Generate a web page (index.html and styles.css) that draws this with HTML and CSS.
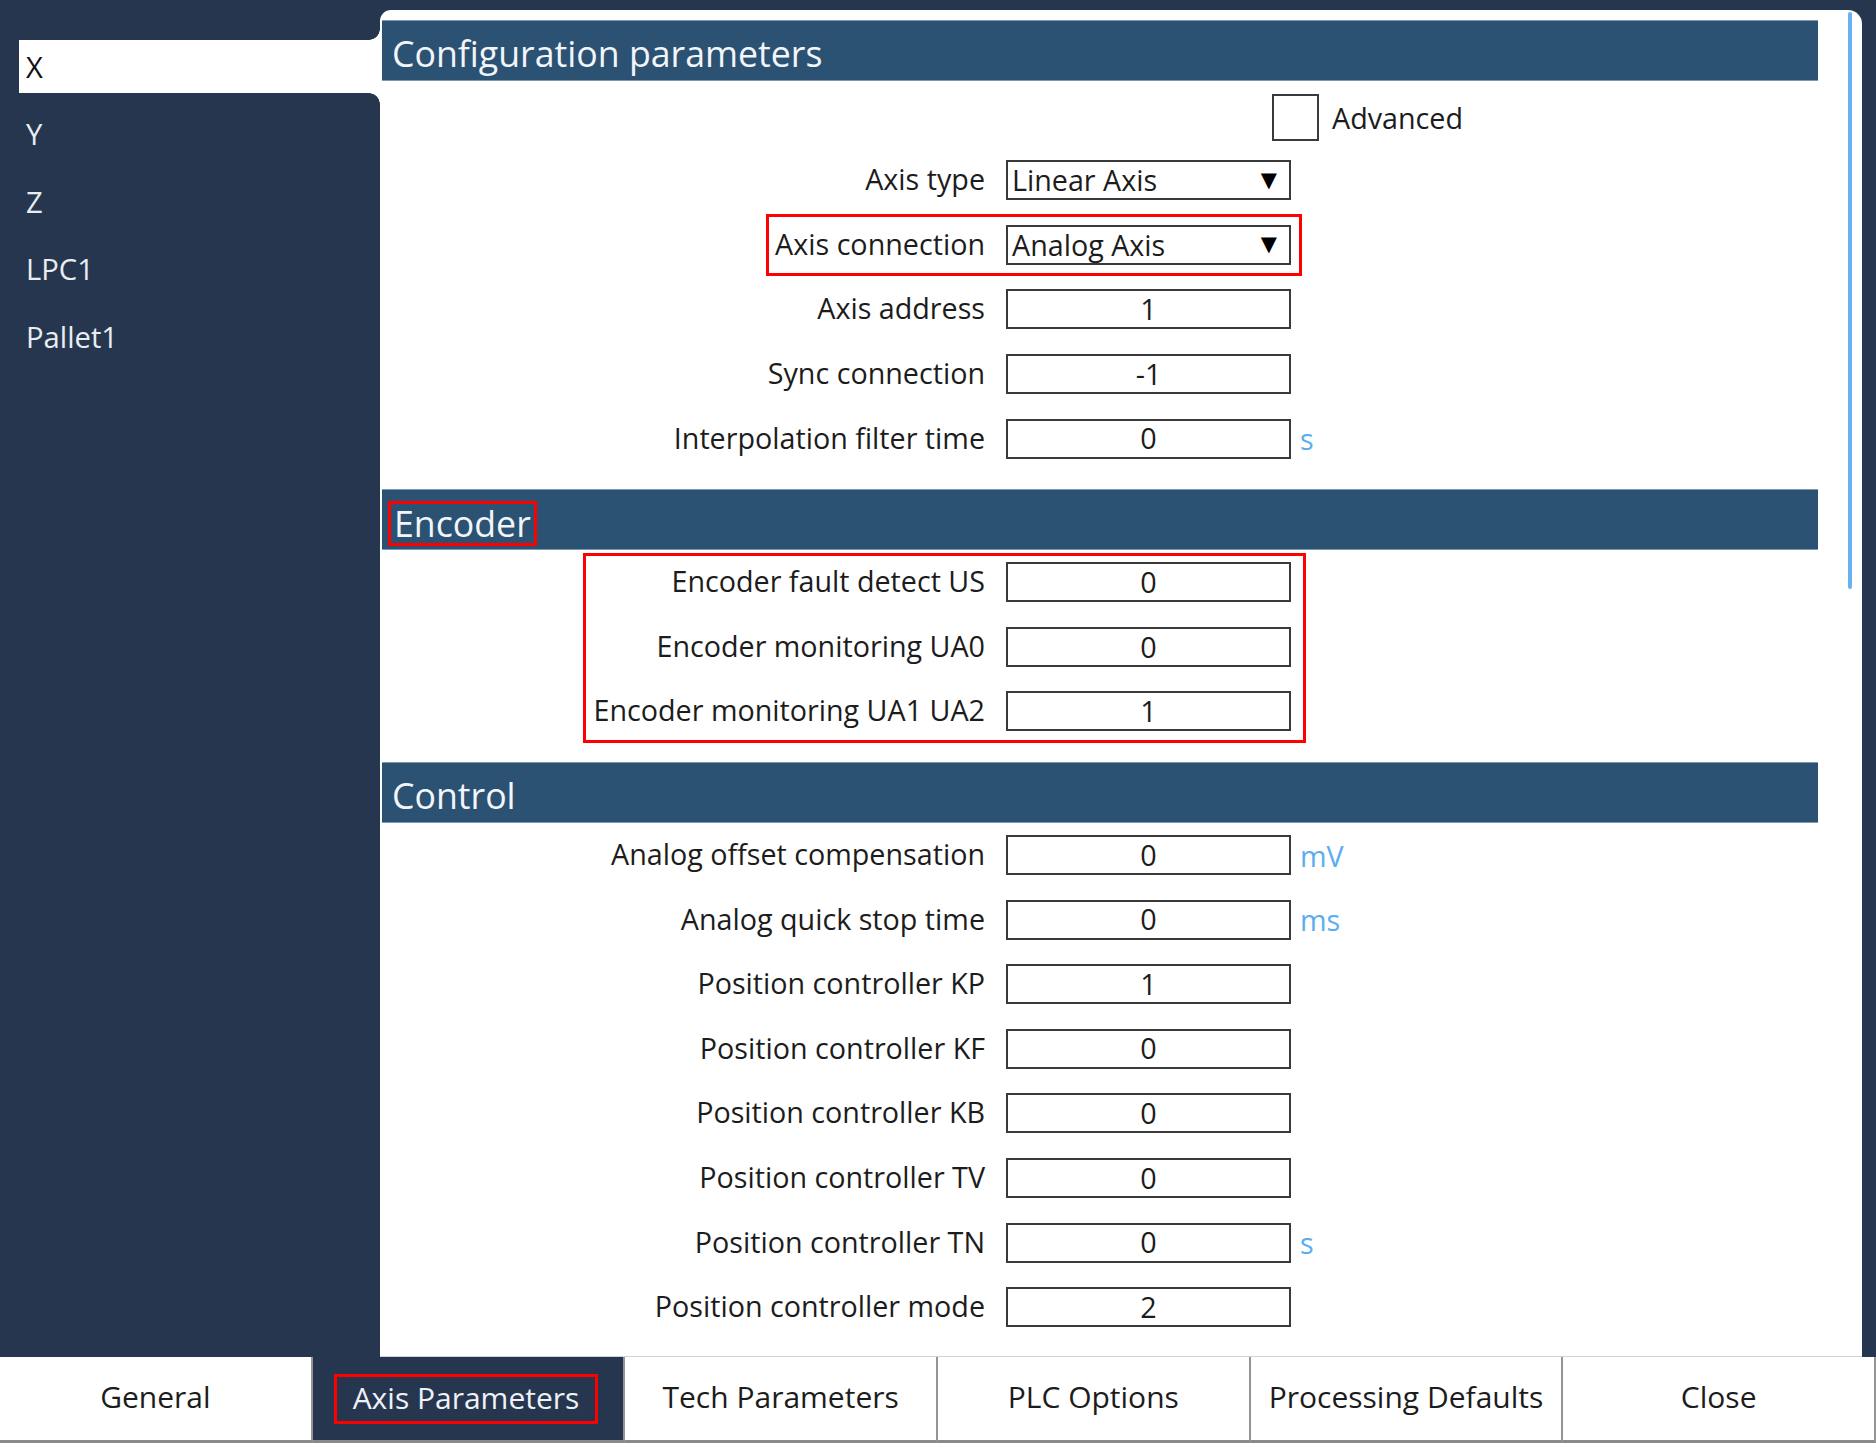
FILE: index.html
```html
<!DOCTYPE html>
<html>
<head>
<meta charset="utf-8">
<link rel="stylesheet" href="styles.css">
</head>
<body>
<div class="app">
  <div class="main">
    <nav class="sidebar">
      <div class="item selected">X</div>
      <div class="item">Y</div>
      <div class="item">Z</div>
      <div class="item">LPC1</div>
      <div class="item">Pallet1</div>
    </nav>
    <section class="panel">
      <div class="scrollbar"></div>
      <div class="head">Configuration parameters</div>
      <div class="adv">
        <span class="check"></span>
        <span class="adv-label">Advanced</span>
      </div>
      <div class="row">
        <div class="lbl">Axis type</div>
        <div class="box select"><span>Linear Axis</span><span class="arrow">▼</span></div>
      </div>
      <div class="row">
        <div class="mark mark-conn"></div>
        <div class="lbl">Axis connection</div>
        <div class="box select"><span>Analog Axis</span><span class="arrow">▼</span></div>
      </div>
      <div class="row">
        <div class="lbl">Axis address</div>
        <div class="box">1</div>
      </div>
      <div class="row">
        <div class="lbl">Sync connection</div>
        <div class="box">-1</div>
      </div>
      <div class="row">
        <div class="lbl">Interpolation filter time</div>
        <div class="box">0</div>
        <div class="unit">s</div>
      </div>

      <div class="head sec"><span class="head-mark">Encoder</span></div>
      <div class="group">
        <div class="mark mark-enc"></div>
        <div class="row">
          <div class="lbl">Encoder fault detect US</div>
          <div class="box">0</div>
        </div>
        <div class="row">
          <div class="lbl">Encoder monitoring UA0</div>
          <div class="box">0</div>
        </div>
        <div class="row">
          <div class="lbl">Encoder monitoring UA1 UA2</div>
          <div class="box">1</div>
        </div>
      </div>

      <div class="head sec">Control</div>
      <div class="row">
        <div class="lbl">Analog offset compensation</div>
        <div class="box">0</div>
        <div class="unit">mV</div>
      </div>
      <div class="row">
        <div class="lbl">Analog quick stop time</div>
        <div class="box">0</div>
        <div class="unit">ms</div>
      </div>
      <div class="row">
        <div class="lbl">Position controller KP</div>
        <div class="box">1</div>
      </div>
      <div class="row">
        <div class="lbl">Position controller KF</div>
        <div class="box">0</div>
      </div>
      <div class="row">
        <div class="lbl">Position controller KB</div>
        <div class="box">0</div>
      </div>
      <div class="row">
        <div class="lbl">Position controller TV</div>
        <div class="box">0</div>
      </div>
      <div class="row">
        <div class="lbl">Position controller TN</div>
        <div class="box">0</div>
        <div class="unit">s</div>
      </div>
      <div class="row">
        <div class="lbl">Position controller mode</div>
        <div class="box">2</div>
      </div>
    </section>
  </div>
  <div class="tabs">
    <div class="tab">General</div>
    <div class="tab active"><span class="tab-mark">Axis Parameters</span></div>
    <div class="tab">Tech Parameters</div>
    <div class="tab">PLC Options</div>
    <div class="tab">Processing Defaults</div>
    <div class="tab">Close</div>
  </div>
</div>
</body>
</html>
```

FILE: styles.css
```css
* { box-sizing: border-box; }
html, body {
  margin: 0;
  padding: 0;
  background: #27364f;
  font-family: "Open Sans", "Liberation Sans", sans-serif;
  font-size: 28.7px;
  color: #1c1c1c;
}
.app {
  width: 1876px;
  height: 1443px;
  display: flex;
  flex-direction: column;
  overflow: hidden;
}
.main {
  height: 1357px;
  display: flex;
}
.sidebar {
  width: 380px;
  flex: none;
  padding: 40px 0 0 19px;
}
.item {
  position: relative;
  height: 53px;
  margin-bottom: 14.5px;
  padding-left: 7px;
  display: flex;
  align-items: center;
  color: #e8edf3;
  font-size: 29.2px;
}
.item.selected {
  background: #fff;
  color: #111;
}
.item.selected::before,
.item.selected::after {
  content: "";
  position: absolute;
  right: 0;
  width: 11px;
  height: 11px;
}
.item.selected::before {
  top: -11px;
  background: radial-gradient(circle at 0 0, #27364f 10.5px, #fff 11px);
}
.item.selected::after {
  bottom: -11px;
  background: radial-gradient(circle at 0 100%, #27364f 10.5px, #fff 11px);
}
.panel {
  position: relative;
  flex: 1;
  margin: 10px 14px 0 0;
  padding: 10px 44px 0 2px;
  background: #fff;
  border-radius: 11px 14px 0 0;
  border-bottom: 1px solid #c9d4e0;
}
.scrollbar {
  position: absolute;
  right: 10px;
  top: 2px;
  width: 4px;
  height: 577px;
  background: #68b2f0;
  border-radius: 2px;
}
.head {
  height: 61px;
  padding: 6px 0 0 10px;
  line-height: 53px;
  font-size: 35.7px;
  color: #f2f5f9;
  background: #2c5273;
  border: 1px solid #7d98b1;
  border-width: 1px 0;
  white-space: nowrap;
}
.head.sec {
  margin-top: 18px;
}
.head-mark {
  display: inline-block;
  margin-left: -4px;
  padding: 0 3px;
  line-height: 39px;
  border: 3px solid #f00;
  position: relative;
  top: 1px;
}
.adv {
  height: 67px;
  padding: 6px 0 0 890px;
  display: flex;
  align-items: center;
}
.check {
  width: 47px;
  height: 47px;
  border: 2px solid #3a3a3a;
}
.adv-label {
  margin-left: 13px;
}
.row {
  position: relative;
  height: 64.6px;
  display: flex;
  align-items: center;
}
.lbl {
  width: 603px;
  text-align: right;
  white-space: nowrap;
  padding-bottom: 3px;
}
.box {
  margin-left: 21px;
  width: 285px;
  height: 40px;
  border: 2px solid #3a3a3a;
  display: flex;
  align-items: center;
  justify-content: center;
  line-height: 1;
}
.box.select {
  justify-content: space-between;
  padding: 0 12px 0 4px;
}
.arrow {
  font-family: "DejaVu Sans", sans-serif;
  font-size: 21px;
  color: #000;
}
.unit {
  margin-left: 9px;
  color: #5aaef0;
}
.group {
  position: relative;
}
.mark {
  position: absolute;
  border: 3px solid #f00;
  pointer-events: none;
}
.mark-conn {
  left: 384px;
  top: 1.5px;
  width: 536px;
  height: 62px;
}
.mark-enc {
  left: 201px;
  top: 3px;
  width: 723px;
  height: 190px;
}
.tabs {
  height: 86px;
  display: grid;
  grid-template-columns: repeat(6, 1fr);
}
.tab {
  background: #fff;
  border-right: 2px solid #959595;
  border-bottom: 3px solid #8a8a8a;
  display: flex;
  align-items: center;
  justify-content: center;
  padding-bottom: 4px;
  font-size: 30px;
  color: #1c1c1c;
  white-space: nowrap;
}
.tab.active {
  background: #27364f;
  color: #eef2f7;
}
.tab-mark {
  display: inline-block;
  padding: 0 16px 2px;
  line-height: 42px;
  border: 3px solid #f00;
  margin-left: -4px;
  position: relative;
  top: 2px;
}
```
